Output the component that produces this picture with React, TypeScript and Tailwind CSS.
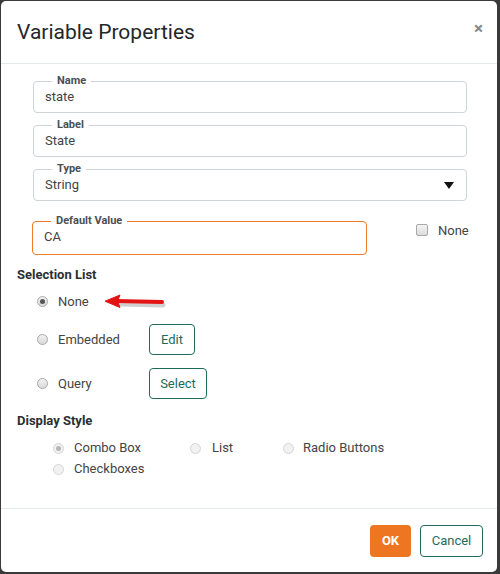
import React from "react";

const font = { fontFamily: "Roboto, 'Liberation Sans', sans-serif" };

const Field = ({ label, value, select, orange }: { label: string; value: string; select?: boolean; orange?: boolean }) => (
  <fieldset
    className={`border rounded-[4px] pl-[11px] pr-[12px] ${orange ? "border-[#ef7b26] pb-[8px]" : "border-[#cfd4d9] pb-[6px]"}`}
  >
    <legend className="ml-[7px] px-[5px] text-[11px] leading-[12px] font-bold text-[#4a4f55]">{label}</legend>
    <div className="flex items-center justify-between h-[19px] text-[13px] text-[#444]">
      <span>{value}</span>
      {select && (
        <svg width="10" height="7" viewBox="0 0 10 7" className="mt-[1px]">
          <path d="M0 0h10L5 7z" fill="#111" />
        </svg>
      )}
    </div>
  </fieldset>
);

const Radio = ({ checked, faint }: { checked?: boolean; faint?: boolean }) => (
  <span
    className={`w-[11px] h-[11px] rounded-full border flex items-center justify-center shrink-0 ${
      faint ? "border-[#d6d6d6] bg-[#f1f1f1]" : "border-[#a9a9a9] bg-gradient-to-b from-[#f2f2f2] to-[#d9d9d9]"
    }`}
  >
    {checked && <span className={`w-[5px] h-[5px] rounded-full ${faint ? "bg-[#b5b5b5]" : "bg-[#555]"}`} />}
  </span>
);

const OutlineBtn = ({ children, w }: { children: React.ReactNode; w: string }) => (
  <button className={`${w} h-[31px] border border-[#1e6b5e] rounded-[4px] text-[13px] text-[#1e6b5e] bg-white`}>
    {children}
  </button>
);

export default function App() {
  return (
    <div className="w-[500px] h-[574px] bg-[#3a3a3a] overflow-hidden" style={font}>
      <div className="ml-[1px] mt-[1px] w-[496px] h-[571px] bg-white rounded-[5px] flex flex-col">
        <div className="h-[63px] border-b border-[#e4e9eb] flex items-center justify-between pl-[16px] pr-[14px]">
          <h1 className="text-[21px] text-[#23272b] mt-[2px]">Variable Properties</h1>
          <span className="text-[17px] text-[#888] font-bold leading-none -mt-[7px]">×</span>
        </div>

        <div className="flex-1 px-[16px] pt-[11px]">
          <div className="pl-[16px] pr-[14px] flex flex-col gap-[6px]">
            <Field label="Name" value="state" />
            <Field label="Label" value="State" />
            <Field label="Type" value="String" select />
          </div>

          <div className="flex items-end mt-[14px]">
            <div className="ml-[15px] w-[335px]">
              <Field label="Default Value" value="CA" orange />
            </div>
            <div className="ml-[49px] mb-[15px] flex items-center gap-[10px]">
              <span className="w-[12px] h-[12px] rounded-[2px] border border-[#a9a9a9] bg-gradient-to-b from-[#f4f4f4] to-[#dcdcdc]" />
              <span className="text-[13px] text-[#444]">None</span>
            </div>
          </div>

          <div className="mt-[12px] text-[13px] leading-[16px] font-bold text-[#2b2f33]">Selection List</div>

          <div className="ml-[20px] mt-[3px] h-[31px] flex items-center">
            <Radio checked />
            <span className="ml-[10px] text-[13px] text-[#444]">None</span>
            <svg width="64" height="18" viewBox="0 0 64 18" className="ml-[15px] mt-[1px]">
              <path d="M14 11L59 12" stroke="#8a8a8a" strokeOpacity="0.4" strokeWidth="5" strokeLinecap="round" />
              <path d="M12 8L58 9" stroke="#e31414" strokeWidth="4" strokeLinecap="round" />
              <path d="M1 8.2L16 2L13.5 8.3L16 14.5Z" fill="#e31414" stroke="#e31414" strokeWidth="1" strokeLinejoin="round" />
            </svg>
          </div>

          <div className="ml-[20px] mt-[7px] h-[31px] flex items-center">
            <Radio />
            <span className="ml-[10px] w-[91px] text-[13px] text-[#444]">Embedded</span>
            <OutlineBtn w="w-[46px]">Edit</OutlineBtn>
          </div>

          <div className="ml-[20px] mt-[13px] h-[31px] flex items-center">
            <Radio />
            <span className="ml-[10px] w-[91px] text-[13px] text-[#444]">Query</span>
            <OutlineBtn w="w-[58px]">Select</OutlineBtn>
          </div>

          <div className="mt-[14px] text-[13px] leading-[16px] font-bold text-[#2b2f33]">Display Style</div>

          <div className="ml-[36px] mt-[9px] grid grid-cols-[137px_93px_auto] gap-y-[1px] text-[13px] text-[#444]">
            <div className="h-[20px] flex items-center gap-[10px]"><Radio checked faint /><span>Combo Box</span></div>
            <div className="h-[20px] flex items-center gap-[11px]"><Radio faint /><span>List</span></div>
            <div className="h-[20px] flex items-center gap-[9px]"><Radio faint /><span>Radio Buttons</span></div>
            <div className="h-[20px] flex items-center gap-[10px]"><Radio faint /><span>Checkboxes</span></div>
          </div>
        </div>

        <div className="h-[64px] border-t border-[#e4e9eb] flex items-center justify-end gap-[9px] pr-[14px]">
          <button className="w-[41px] h-[32px] rounded-[4px] bg-[#ee7623] text-white text-[13px] font-bold">OK</button>
          <button className="w-[63px] h-[32px] border border-[#1e6b5e] rounded-[4px] text-[13px] text-[#1e6b5e] bg-white">Cancel</button>
        </div>
      </div>
    </div>
  );
}
